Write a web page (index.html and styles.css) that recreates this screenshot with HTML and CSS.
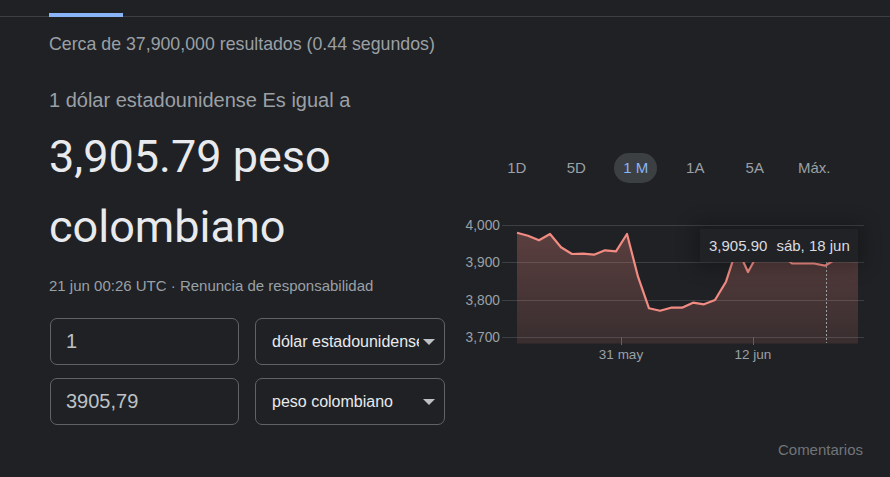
FILE: index.html
```html
<!DOCTYPE html>
<html lang="es">
<head>
    <meta charset="UTF-8">
    <meta name="viewport" content="width=device-width, initial-scale=1.0">
    <title>Conversor de divisas</title>

    <link rel="stylesheet" href="styles.css">
</head>
<body>

    <div id="tabs">
        <div class="tab-active"></div>
    </div>

    <div id="main">
        <div class="stats">Cerca de 37,900,000 resultados (0.44 segundos)</div>

        <div id="converter">
            <div class="left">
                <div class="equal">1 dólar estadounidense Es igual a</div>
                <div class="value">3,905.79 peso colombiano</div>
                <div class="date">21 jun 00:26 UTC · <span class="disclaimer">Renuncia de responsabilidad</span></div>

                <div class="row">
                    <div class="amount">1</div>
                    <div class="currency">
                        <span class="currency-name">dólar estadounidense</span>
                        <span class="arrow"></span>
                    </div>
                </div>
                <div class="row">
                    <div class="amount">3905,79</div>
                    <div class="currency">
                        <span class="currency-name">peso colombiano</span>
                        <span class="arrow"></span>
                    </div>
                </div>
            </div>

            <div class="right">
                <div class="ranges">
                    <span class="range">1D</span>
                    <span class="range">5D</span>
                    <span class="range active">1 M</span>
                    <span class="range">1A</span>
                    <span class="range">5A</span>
                    <span class="range">Máx.</span>
                </div>

                <div class="chart">
                    <svg width="410" height="150" viewBox="460 215 410 150">
                        <defs>
                            <linearGradient id="fill" gradientUnits="userSpaceOnUse" x1="0" y1="225" x2="0" y2="343">
                                <stop offset="0" stop-color="#f28b82" stop-opacity="0.29"/>
                                <stop offset="1" stop-color="#f28b82" stop-opacity="0.12"/>
                            </linearGradient>
                        </defs>

                        <g class="grid">
                            <line x1="502" y1="225.5" x2="864" y2="225.5"/>
                            <line x1="502" y1="262.5" x2="864" y2="262.5"/>
                            <line x1="502" y1="300.5" x2="864" y2="300.5"/>
                            <line x1="502" y1="337.5" x2="864" y2="337.5"/>
                        </g>
                        <g class="ylabels">
                            <text x="500" y="230">4,000</text>
                            <text x="500" y="267">3,900</text>
                            <text x="500" y="305">3,800</text>
                            <text x="500" y="342">3,700</text>
                        </g>

                        <polygon fill="url(#fill)" points="517,232.7 528,235.7 539,240.3 550,234 561,247.3 572,254 583,253.7 594,254.7 605,250.3 616,251.3 627,234 638,276.7 649,308.3 660,310.7 671,307.7 682,307.7 693,302.7 704,304.3 715,300 726,281.7 737,248 748,272 759,252 770,250 781,255 792,263.3 803,263.5 814,263.5 825,265.7 836,259 847,258 858,257 858,343.5 517,343.5"/>
                        <polyline class="line" points="517,232.7 528,235.7 539,240.3 550,234 561,247.3 572,254 583,253.7 594,254.7 605,250.3 616,251.3 627,234 638,276.7 649,308.3 660,310.7 671,307.7 682,307.7 693,302.7 704,304.3 715,300 726,281.7 737,248 748,272 759,252 770,250 781,255 792,263.3 803,263.5 814,263.5 825,265.7 836,259 847,258 858,257"/>

                        <line class="cursor" x1="826.5" y1="262" x2="826.5" y2="343"/>
                        <g class="ticks">
                            <line x1="621.5" y1="337" x2="621.5" y2="345"/>
                            <line x1="753.5" y1="337" x2="753.5" y2="345"/>
                        </g>
                        <g class="xlabels">
                            <text x="621" y="359">31 may</text>
                            <text x="753" y="359">12 jun</text>
                        </g>
                    </svg>

                    <div class="tooltip">
                        <span>3,905.90</span>
                        <span>sáb, 18 jun</span>
                    </div>
                </div>
            </div>
        </div>

        <div class="feedback">Comentarios</div>
    </div>

</body>
</html>
```

FILE: styles.css
```css
body {
    font-family: 'Liberation Sans', Arial, sans-serif;
    margin: 0;
    background-color: #202124;
    color: #9aa0a6;
    overflow: hidden;
}

#tabs {
    height: 16px;
    border-bottom: 1px solid #3c4043;
    padding-left: 49px;
    display: flex;
    align-items: flex-end;
}

.tab-active {
    width: 74px;
    height: 4px;
    margin-bottom: -1px;
    background-color: #8ab4f8;
}

#main {
    padding: 0 20px 0 49px;
}

.stats {
    margin-top: 16px;
    font-size: 17.75px;
    line-height: 22px;
    color: #9aa0a6;
}

#converter {
    display: flex;
    margin-top: 32px;
}

.left {
    width: 396px;
}

.equal {
    font-size: 20px;
    line-height: 26px;
    color: #9aa0a6;
}

.value {
    margin-top: 9px;
    font-family: Roboto, sans-serif;
    font-size: 45px;
    line-height: 70px;
    color: #e8eaed;
}

.date {
    margin-top: 14px;
    font-size: 15px;
    line-height: 20px;
    color: #9aa0a6;
}

.row {
    display: flex;
    gap: 16px;
    margin-left: 1px;
    margin-top: 13px;
}

.date + .row {
    margin-top: 22px;
}

.amount,
.currency {
    box-sizing: border-box;
    height: 47px;
    border: 1px solid #5f6368;
    border-radius: 7px;
    display: flex;
    align-items: center;
}

.amount {
    width: 189px;
    padding-left: 15px;
    font-size: 20px;
    color: #bdc1c6;
}

.currency {
    width: 190px;
    padding: 0 9px 0 16px;
    font-size: 16px;
    color: #e8eaed;
}

.currency-name {
    flex: 1;
    overflow: hidden;
    white-space: nowrap;
}

.arrow {
    width: 0;
    height: 0;
    margin-left: 4px;
    border-left: 6px solid transparent;
    border-right: 6px solid transparent;
    border-top: 6px solid #bdc1c6;
}

.right {
    margin-left: 15px;
    width: 410px;
}

.ranges {
    display: grid;
    grid-template-columns: repeat(6, 59.5px);
    margin: 66px 0 0 27px;
    justify-items: center;
}

.range {
    height: 30px;
    line-height: 30px;
    padding: 0 9px;
    border-radius: 15px;
    font-size: 15px;
    color: #9aa0a6;
}

.range.active {
    background-color: #3c4043;
    color: #8ab4f8;
}

.chart {
    position: relative;
    margin-top: 32px;
    height: 150px;
}

.chart svg {
    display: block;
}

.grid line {
    stroke: #3c4043;
    stroke-width: 1;
}

.ylabels text {
    font-size: 13.75px;
    fill: #9aa0a6;
    text-anchor: end;
}

.xlabels text {
    font-size: 13.5px;
    fill: #9aa0a6;
    text-anchor: middle;
}

.line {
    fill: none;
    stroke: #f28b82;
    stroke-width: 2.2;
    stroke-linejoin: round;
}

.cursor {
    stroke: #9aa0a6;
    stroke-width: 1;
    stroke-dasharray: 2 2;
}

.ticks line {
    stroke: #5f6368;
    stroke-width: 1;
}

.tooltip {
    position: absolute;
    left: 240px;
    top: 14px;
    width: 158px;
    height: 33px;
    box-sizing: border-box;
    padding: 0 9px;
    display: flex;
    align-items: center;
    gap: 9px;
    background-color: #212225;
    box-shadow: 0 0 18px 6px rgba(0, 0, 0, 0.25);
    font-size: 15px;
    color: #dadce0;
    white-space: nowrap;
}

.feedback {
    margin-top: 15px;
    padding-right: 7px;
    text-align: right;
    font-size: 15px;
    line-height: 20px;
    color: #70757a;
}
```
